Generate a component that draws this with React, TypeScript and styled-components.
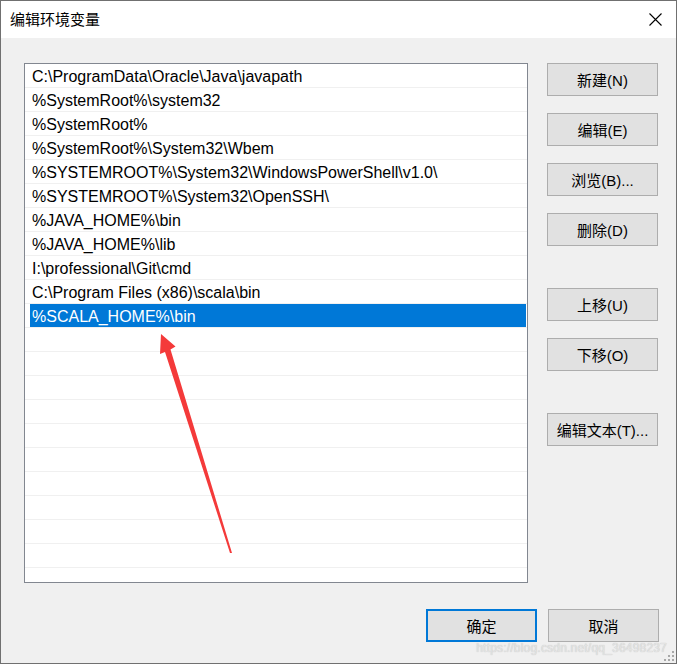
import React from "react";
import styled, { createGlobalStyle } from "styled-components";

const GlobalStyle = createGlobalStyle`
  html, body { margin: 0; padding: 0; background: #f0f0f0; }
  * { box-sizing: border-box; }
`;

const FONT = `"Liberation Sans", "Noto Sans CJK SC", sans-serif`;

const Window = styled.div`
  position: relative;
  width: 677px;
  height: 664px;
  border: 1px solid #707070;
  background: #f0f0f0;
  display: flex;
  flex-direction: column;
  font-family: ${FONT};
  overflow: hidden;
`;

const TitleBar = styled.div`
  height: 37px;
  background: #ffffff;
  display: flex;
  align-items: center;
  justify-content: space-between;
  padding: 0 14px 0 9px;
  flex-shrink: 0;
`;

const Title = styled.span`
  font-size: 15px;
  color: #000;
  line-height: 1;
`;

const CloseIcon = styled.svg`
  width: 13px;
  height: 13px;
  display: block;
`;

const Body = styled.div`
  flex: 1;
  display: flex;
  flex-direction: column;
  padding: 25px 17px 20px 23px;
`;

const MainRow = styled.div`
  display: flex;
  gap: 19px;
`;

const ListBox = styled.div`
  position: relative;
  width: 504px;
  height: 520px;
  background: #ffffff;
  border: 1px solid #828790;
  overflow: hidden;
`;

const Row = styled.div`
  height: 24px;
  border-bottom: 1px solid #f0f0f0;
  display: flex;
  padding-right: 1px;
`;

const RowLabel = styled.div<{ $selected?: boolean }>`
  flex: 1;
  margin-left: 5px;
  padding-left: 2px;
  padding-top: 3px;
  font-size: 16px;
  line-height: 20px;
  white-space: nowrap;
  color: ${(p) => (p.$selected ? "#ffffff" : "#000000")};
  background: ${(p) => (p.$selected ? "#0078d7" : "transparent")};
`;

const ButtonColumn = styled.div`
  display: flex;
  flex-direction: column;
`;

const Button = styled.button<{ $gap?: number; $primary?: boolean }>`
  width: 111px;
  height: 33px;
  margin-top: ${(p) => p.$gap ?? 0}px;
  background: #e1e1e1;
  border: ${(p) => (p.$primary ? "2px solid #0078d7" : "1px solid #adadad")};
  font-family: ${FONT};
  font-size: 15px;
  color: #000;
  padding: 0;
  display: flex;
  align-items: center;
  justify-content: center;
`;

const Footer = styled.div`
  display: flex;
  justify-content: flex-end;
  gap: 11px;
  margin-top: 26px;
`;

const Arrow = styled.svg`
  position: absolute;
  left: 0;
  top: 0;
  pointer-events: none;
`;

const Watermark = styled.div`
  position: absolute;
  right: 9px;
  bottom: 8px;
  font-family: ${FONT};
  font-size: 12px;
  color: #e4e4e4;
  text-shadow: 0 0 1px #b8b8b8;
  letter-spacing: 0.2px;
`;

const Grip = styled.svg`
  position: absolute;
  right: 1px;
  bottom: 1px;
`;

const items = [
  "C:\\ProgramData\\Oracle\\Java\\javapath",
  "%SystemRoot%\\system32",
  "%SystemRoot%",
  "%SystemRoot%\\System32\\Wbem",
  "%SYSTEMROOT%\\System32\\WindowsPowerShell\\v1.0\\",
  "%SYSTEMROOT%\\System32\\OpenSSH\\",
  "%JAVA_HOME%\\bin",
  "%JAVA_HOME%\\lib",
  "I:\\professional\\Git\\cmd",
  "C:\\Program Files (x86)\\scala\\bin",
  "%SCALA_HOME%\\bin",
];

const rows = [...items, ...Array(11).fill("")];

export default function App() {
  return (
    <>
      <GlobalStyle />
      <Window>
        <TitleBar>
          <Title>编辑环境变量</Title>
          <CloseIcon viewBox="0 0 13 13">
            <path d="M0.5 0.5 L12.5 12.5 M12.5 0.5 L0.5 12.5" stroke="#000" strokeWidth="1.1" fill="none" />
          </CloseIcon>
        </TitleBar>
        <Body>
          <MainRow>
            <ListBox>
              {rows.map((t, i) => (
                <Row key={i}>
                  <RowLabel $selected={i === 10}>{t}</RowLabel>
                </Row>
              ))}
              <Arrow width="504" height="520" viewBox="0 0 504 520">
                <g transform="translate(-25 -64)">
                  <polygon
                    points="161,334 175.5,346.5 170.5,349.5 232,553 230,553 165,352 160,354"
                    fill="#f43a3a"
                  />
                </g>
              </Arrow>
            </ListBox>
            <ButtonColumn>
              <Button>新建(N)</Button>
              <Button $gap={17}>编辑(E)</Button>
              <Button $gap={17}>浏览(B)...</Button>
              <Button $gap={17}>删除(D)</Button>
              <Button $gap={42}>上移(U)</Button>
              <Button $gap={17}>下移(O)</Button>
              <Button $gap={42}>编辑文本(T)...</Button>
            </ButtonColumn>
          </MainRow>
          <Footer>
            <Button $primary>确定</Button>
            <Button>取消</Button>
          </Footer>
        </Body>
        <Watermark>https://blog.csdn.net/qq_36498237</Watermark>
        <Grip width="12" height="12" viewBox="0 0 12 12">
          {[
            [8, 0],
            [4, 4],
            [8, 4],
            [0, 8],
            [4, 8],
            [8, 8],
          ].map(([x, y], i) => (
            <rect key={i} x={x + 1} y={y + 1} width="2" height="2" fill="#a8a8a8" />
          ))}
        </Grip>
      </Window>
    </>
  );
}
